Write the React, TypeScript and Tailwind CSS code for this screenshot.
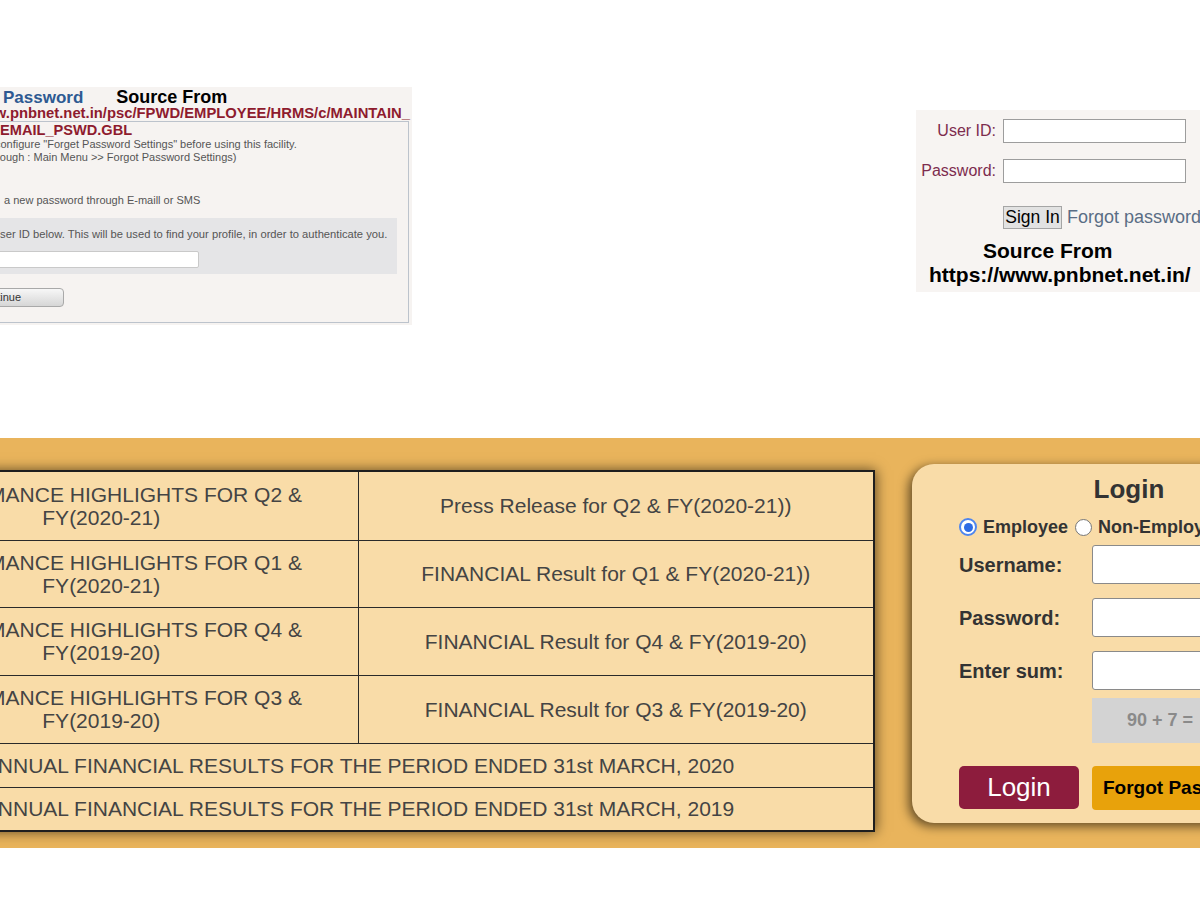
import React from "react";

const rows: { l1: string; l2: string; right: string; h: string }[] = [
  { l1: "PERFORMANCE HIGHLIGHTS FOR Q2 &", l2: "FY(2020-21)", right: "Press Release for Q2 & FY(2020-21))", h: "h-[69px]" },
  { l1: "PERFORMANCE HIGHLIGHTS FOR Q1 &", l2: "FY(2020-21)", right: "FINANCIAL Result for Q1 & FY(2020-21))", h: "h-[67px]" },
  { l1: "PERFORMANCE HIGHLIGHTS FOR Q4 &", l2: "FY(2019-20)", right: "FINANCIAL Result for Q4 & FY(2019-20)", h: "h-[68px]" },
  { l1: "PERFORMANCE HIGHLIGHTS FOR Q3 &", l2: "FY(2019-20)", right: "FINANCIAL Result for Q3 & FY(2019-20)", h: "h-[68px]" },
];

function ForgotPanel() {
  return (
    <div className="mt-[87px] h-[238px] w-[412px] shrink-0 overflow-hidden bg-[#f6f3f1]">
      <div className="pt-[2px]">
        <div className="flex h-[16px] items-baseline whitespace-nowrap leading-[16px]">
          <span className="ml-[3px] text-[17px] font-bold text-[#2e5a92]">Password</span>
          <span className="ml-[33px] text-[18px] font-bold text-black">Source From</span>
        </div>
        <div className="flex h-[16px] justify-end whitespace-nowrap pr-[2px] text-[14.8px] font-bold leading-[16px] text-[#8e1b2e]">
          <span>https://www.pnbnet.net.in/psc/FPWD/EMPLOYEE/HRMS/c/MAINTAIN_</span>
        </div>
      </div>
      <div className="ml-[-1px] mr-[3px] h-[202px] border border-[#bcc3cc]">
        <div className="h-[16px] whitespace-nowrap text-[14.6px] font-bold leading-[16px] text-[#8e1b2e]">EMAIL_PSWD.GBL</div>
        <div className="whitespace-nowrap text-[11px] leading-[13px] text-[#555]">
          <div className="ml-[-5px]">configure "Forget Password Settings" before using this facility.</div>
          <div className="ml-[-13px]">through : Main Menu &gt;&gt; Forgot Password Settings)</div>
          <div className="ml-[4px] mt-[30px]">a new password through E-maill or SMS</div>
        </div>
        <div className="mr-[11px] mt-[11px] h-[56px] bg-[#e5e5e7] pt-[10px]">
          <div className="ml-[-8px] whitespace-nowrap text-[11.2px] leading-[13px] text-[#555]">
            User ID below. This will be used to find your profile, in order to authenticate you.
          </div>
          <div className="ml-[-20px] mt-[10px] h-[17px] w-[219px] rounded-[2px] border border-[#c9c9c9] bg-white" />
        </div>
        <div className="ml-[-31px] mt-[14px] flex h-[19px] w-[95px] items-center rounded-[4px] border border-[#a9a9a9] bg-gradient-to-b from-[#f7f7f7] to-[#d6d6d6] pl-[7px] text-[11px] text-[#333]">
          Continue
        </div>
      </div>
    </div>
  );
}

function SignInPanel() {
  return (
    <div className="ml-auto mt-[110px] h-[182px] w-[284px] shrink-0 overflow-hidden bg-[#f7f4f2] pt-[9px] text-[16px]">
      <div className="flex items-center">
        <div className="w-[80px] shrink-0 text-right text-[#7d2c4e]">User ID:</div>
        <div className="ml-[7px] h-[24px] w-[183px] shrink-0 border border-[#9d9d9d] bg-white" />
      </div>
      <div className="mt-[16px] flex items-center">
        <div className="w-[80px] shrink-0 text-right text-[#7d2c4e]">Password:</div>
        <div className="ml-[7px] h-[24px] w-[183px] shrink-0 border border-[#9d9d9d] bg-white" />
      </div>
      <div className="mt-[21px] flex items-center whitespace-nowrap pl-[87px]">
        <div className="flex h-[23px] w-[59px] shrink-0 items-center justify-center border border-[#a5a5a5] bg-[#e2e2e2] text-[17.5px] text-black">
          Sign In
        </div>
        <span className="ml-[5px] shrink-0 text-[18px] text-[#5a6d85]">Forgot password</span>
      </div>
      <div className="mt-[8px] whitespace-nowrap text-[21px] font-bold leading-[24px] text-black">
        <div className="pl-[67px]">Source From</div>
        <div className="pl-[13px]">https://www.pnbnet.net.in/</div>
      </div>
    </div>
  );
}

function ResultsTable() {
  return (
    <div className="ml-[-157px] mt-[32px] w-[1030px] shrink-0 shadow-[3px_0px_12px_rgba(0,0,0,0.6)]">
      <table className="w-full table-fixed border-collapse border-2 border-[#1e1e1e] bg-[#f9dca8] text-center text-[21px] leading-[23px] text-[#444]">
        <colgroup>
          <col className="w-[514px]" />
          <col className="w-[516px]" />
        </colgroup>
        <tbody>
          {rows.map((r) => (
            <tr key={r.l1 + r.l2} className={r.h}>
              <td className="whitespace-nowrap border border-[#2a2a2a] px-[4px] align-middle">
                {r.l1}
                <br />
                {r.l2}
              </td>
              <td className="border border-[#2a2a2a] px-[4px] align-middle">{r.right}</td>
            </tr>
          ))}
          <tr className="h-[44px]">
            <td colSpan={2} className="whitespace-nowrap border border-[#2a2a2a] align-middle">
              ANNUAL FINANCIAL RESULTS FOR THE PERIOD ENDED 31st MARCH, 2020
            </td>
          </tr>
          <tr className="h-[44px]">
            <td colSpan={2} className="whitespace-nowrap border border-[#2a2a2a] align-middle">
              ANNUAL FINANCIAL RESULTS FOR THE PERIOD ENDED 31st MARCH, 2019
            </td>
          </tr>
        </tbody>
      </table>
    </div>
  );
}

function LoginPanel() {
  return (
    <div className="ml-[39px] mt-[26px] h-[359px] w-[434px] shrink-0 rounded-[22px] bg-[#f9dca8] pt-[10px] text-[#333] shadow-[-3px_3px_11px_rgba(0,0,0,0.6)]">
      <div className="text-center text-[26px] font-bold leading-[30px]">Login</div>
      <div className="mt-[13px] flex h-[20px] items-center whitespace-nowrap pl-[47px] text-[18px] font-bold">
        <div className="flex h-[18px] w-[18px] shrink-0 items-center justify-center rounded-full border-2 border-[#4f86ee] bg-white">
          <div className="h-[9px] w-[9px] rounded-full bg-[#2d6be4]" />
        </div>
        <span className="ml-[6px]">Employee</span>
        <div className="ml-[7px] h-[17px] w-[17px] shrink-0 rounded-full border border-[#777] bg-white" />
        <span className="ml-[6px]">Non-Employee</span>
      </div>
      {["Username:", "Password:", "Enter sum:"].map((l, i) => (
        <div key={l} className={`flex items-center pl-[47px] ${i === 0 ? "mt-[8px]" : "mt-[14px]"}`}>
          <div className="w-[133px] shrink-0 text-[20px] font-bold">{l}</div>
          <div className="h-[39px] w-[260px] shrink-0 rounded-[3px] border border-[#8a8a8a] bg-white" />
        </div>
      ))}
      <div className="ml-[180px] mt-[8px] flex h-[45px] w-[260px] items-center bg-[#d3d3d3] pl-[35px] text-[18px] font-bold text-[#8a8a8a]">
        90 + 7 =
      </div>
      <div className="mt-[23px] flex items-start pl-[47px]">
        <div className="flex h-[43px] w-[120px] shrink-0 items-center justify-center rounded-[5px] bg-[#8d1c3d] text-[26px] text-white">
          Login
        </div>
        <div className="ml-[13px] flex h-[44px] w-[220px] shrink-0 items-center whitespace-nowrap rounded-[4px] bg-[#e8a20b] pl-[11px] text-[19px] font-bold text-black">
          Forgot Password
        </div>
      </div>
    </div>
  );
}

export default function App() {
  return (
    <div className="h-[900px] w-[1200px] overflow-hidden bg-white font-['Liberation_Sans',Arial,sans-serif]">
      <div className="flex h-[438px] items-start">
        <ForgotPanel />
        <SignInPanel />
      </div>
      <div className="flex h-[410px] items-start overflow-hidden bg-[#e9b45c]">
        <ResultsTable />
        <LoginPanel />
      </div>
    </div>
  );
}
